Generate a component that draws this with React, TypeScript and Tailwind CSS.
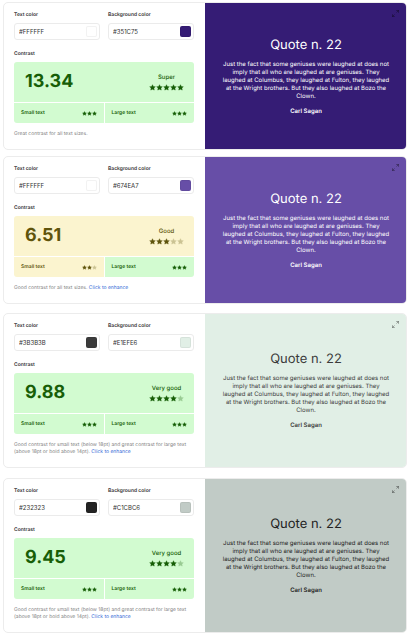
import React, { useId, useState } from "react";

type Tone = "green" | "yellow";

type Check = {
  text: string;
  background: string;
  score: string;
  rating: string;
  stars: number;
  tone: Tone;
  small: number;
  smallTone: Tone;
  note: string;
  enhance: boolean;
};

const checks: Check[] = [
  { text: "#FFFFFF", background: "#351C75", score: "13.34", rating: "Super", stars: 5, tone: "green", small: 3, smallTone: "green", note: "Great contrast for all text sizes.", enhance: false },
  { text: "#FFFFFF", background: "#674EA7", score: "6.51", rating: "Good", stars: 3, tone: "yellow", small: 2, smallTone: "yellow", note: "Good contrast for all text sizes.", enhance: true },
  { text: "#3B3B3B", background: "#E1EFE6", score: "9.88", rating: "Very good", stars: 4, tone: "green", small: 3, smallTone: "green", note: "Good contrast for small text (below 18pt) and great contrast for large text (above 18pt or bold above 14pt).", enhance: true },
  { text: "#232323", background: "#C1CBC6", score: "9.45", rating: "Very good", stars: 4, tone: "green", small: 3, smallTone: "green", note: "Good contrast for small text (below 18pt) and great contrast for large text (above 18pt or bold above 14pt).", enhance: true },
];

const tones: Record<Tone, string> = {
  green: "bg-[#d2fbd0] text-[#175e07]",
  yellow: "bg-[#fbf4cf] text-[#5f540c]",
};

function Stars({ value, total, size }: { value: number; total: number; size: "lg" | "sm" }) {
  return (
    <span role="img" aria-label={`${value} of ${total} stars`} className="flex">
      {Array.from({ length: total }, (_, i) => (
        <svg
          key={i}
          viewBox="-1 -1 26 26"
          className={`${size === "lg" ? "h-[7px] w-[7px]" : "h-[5px] w-[5px]"} ${i < value ? "" : "opacity-30"}`}
          fill="currentColor"
          stroke="currentColor"
          strokeWidth="1.5"
          strokeLinejoin="round"
        >
          <path d="M12 1.5l3.2 6.7 7.3 1-5.3 5.1 1.3 7.3-6.5-3.5-6.5 3.5 1.3-7.3-5.3-5.1 7.3-1z" />
        </svg>
      ))}
    </span>
  );
}

function ColorField({ label, initial }: { label: string; initial: string }) {
  const id = useId();
  const [value, setValue] = useState(initial);
  return (
    <div className="min-w-0 flex-1">
      <label htmlFor={id} className="block text-[5px] leading-[7px] font-semibold text-[#333]">
        {label}
      </label>
      <div className="mt-1 flex h-[17px] items-center rounded-[3px] border border-[#ebebeb] pr-[2px] pl-1">
        <input
          id={id}
          value={value}
          onChange={(e) => setValue(e.target.value)}
          className="min-w-0 flex-1 bg-transparent text-[6px] leading-[8px] text-[#333] outline-none"
        />
        <button
          type="button"
          aria-label={`Pick ${label.toLowerCase()}`}
          className="h-[11px] w-[11px] shrink-0 rounded-[2px] border border-black/5"
          style={{ backgroundColor: value }}
        />
      </div>
    </div>
  );
}

function SizeRow({ label, value, tone }: { label: string; value: number; tone: Tone }) {
  return (
    <div className={`flex h-5 items-center justify-between px-[7px] ${tones[tone]}`}>
      <span className="text-[5px] leading-[7px] font-semibold">{label}</span>
      <Stars value={value} total={3} size="sm" />
    </div>
  );
}

function ContrastCard({ check }: { check: Check }) {
  return (
    <article className="grid grid-cols-2 overflow-hidden rounded-[5px] border border-[#ececec] bg-white">
      <section className="min-w-0 pt-[9px] pr-[11px] pb-[11px] pl-[10px]">
        <div className="flex gap-2">
          <ColorField label="Text color" initial={check.text} />
          <ColorField label="Background color" initial={check.background} />
        </div>
        <h3 className="mt-[11px] text-[5px] leading-[7px] font-semibold text-[#333]">Contrast</h3>
        <div className="mt-1 flex flex-col gap-px overflow-hidden rounded-[3px]">
          <div className={`flex h-10 items-center justify-between pr-[10px] pl-[11px] ${tones[check.tone]}`}>
            <strong className="text-[18px] leading-5 font-bold">{check.score}</strong>
            <div className="flex flex-col items-center gap-[2px]">
              <span className="text-[6px] leading-[8px] font-medium">{check.rating}</span>
              <Stars value={check.stars} total={5} size="lg" />
            </div>
          </div>
          <div className="grid grid-cols-2 gap-px">
            <SizeRow label="Small text" value={check.small} tone={check.smallTone} />
            <SizeRow label="Large text" value={3} tone="green" />
          </div>
        </div>
        <p className="mt-2 text-[5px] leading-[7px] text-[#858585]">
          {check.note}
          {check.enhance && (
            <>
              {" "}
              <a href="#enhance" className="text-[#3269d6]">Click to enhance</a>
            </>
          )}
        </p>
      </section>
      <section
        className="relative -my-px -mr-px flex min-w-0 flex-col items-center justify-center px-4 text-center"
        style={{ backgroundColor: check.background, color: check.text }}
      >
        <button type="button" aria-label="Full screen" className="absolute top-2 right-2 text-black/45">
          <svg viewBox="0 0 14 14" className="h-[7px] w-[7px]" fill="none" stroke="currentColor" strokeWidth="1.5">
            <path d="M8.5 1H13v4.500M13 1L9 5M5.500 13H1V8.500M1 13l4-4" />
          </svg>
        </button>
        <h2 className="text-[13px] leading-4">Quote n. 22</h2>
        <p className="mt-2 text-[6px] leading-[8px]">
          Just the fact that some geniuses were laughed at does not imply that all who are laughed at are geniuses. They
          laughed at Columbus, they laughed at Fulton, they laughed at the Wright brothers. But they also laughed at
          Bozo the Clown.
        </p>
        <p className="mt-[7px] text-[6px] leading-[8px] font-semibold">Carl Sagan</p>
      </section>
    </article>
  );
}

export default function App() {
  return (
    <main className="flex flex-col gap-[9px] bg-white pt-[2px] pr-[5px] pb-px pl-[3px] font-['Inter','Liberation_Sans',sans-serif] [text-rendering:geometricPrecision]">
      <div className="flex flex-col gap-[6px]">
        <ContrastCard check={checks[0]} />
        <ContrastCard check={checks[1]} />
      </div>
      <div className="flex flex-col gap-[10px]">
        <ContrastCard check={checks[2]} />
        <ContrastCard check={checks[3]} />
      </div>
    </main>
  );
}
